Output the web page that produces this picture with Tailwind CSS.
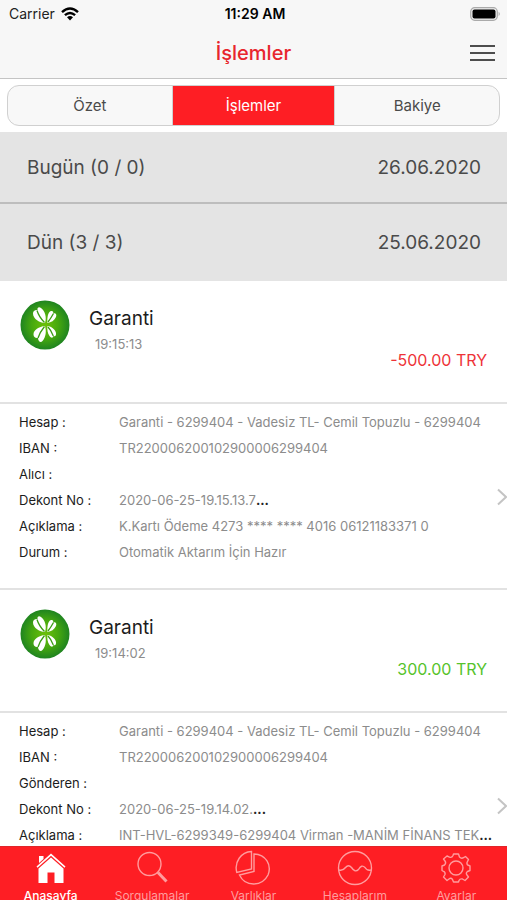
<!DOCTYPE html>
<html lang="tr">
<head>
<meta charset="utf-8">
<meta name="viewport" content="width=device-width, initial-scale=1">
<title>İşlemler</title>
<script src="https://cdn.jsdelivr.net/npm/@tailwindcss/browser@4"></script>
</head>
<body class="flex h-screen flex-col overflow-hidden bg-white font-['Inter','Liberation_Sans',sans-serif] text-[#4a4a4a]">
<svg class="absolute size-0" aria-hidden="true">
  <defs>
    <radialGradient id="leafBg"><stop offset="0" stop-color="#6cc008"/><stop offset=".55" stop-color="#46a80f"/><stop offset="1" stop-color="#1f8420"/></radialGradient>
    <symbol id="clover" viewBox="0 0 50 50">
      <circle cx="25" cy="25" r="24.5" fill="url(#leafBg)"/>
      <g fill="#fff">
        <path d="M25 23C20 23 13 19 13 13.500C13 11 15 9.500 17.500 10C17 7.500 19 6.500 21 8C25 11 27 17 25 23Z"/>
        <path d="M27.500 23C27 18 28 11.500 31 11C33 10.500 33.500 12 33.300 13.500C35.500 12.500 37 14.500 36 17C34.500 20.500 31 22.500 27.500 23Z"/>
        <path d="M25 26C19 26.500 13.500 30 13.500 34.500C13.500 37 15.500 38.500 18 38C18 41 20.500 43.500 22.500 41C26 37 26.500 31 25 26Z"/>
        <path d="M27.500 26C31.500 26.500 35.500 29.500 36 33C36.400 35.500 35 37 33.300 36C33 38.500 31 38 29.500 36C27.500 33 27 29.500 27.500 26Z"/>
      </g>
      <g fill="none" stroke="#3a9c14" stroke-width="1.300">
        <path d="M17 10.500Q19 17 24.500 22.500M33.500 13.500Q31 18 28 22M18 38Q20 32 24.500 26.500M33.300 36Q31 30 28 27"/>
      </g>
    </symbol>
  </defs>
</svg>

<header class="shrink-0 border-b border-[#c4c4c4] bg-[#f7f7f7]">
  <div class="grid h-7 grid-cols-3 items-center pr-[6px] pl-[9px] text-[#222]">
    <div class="flex items-center gap-[6px] text-sm">
      <span>Carrier</span>
      <svg class="h-[14px] w-[18px]" viewBox="0 0 18 14" fill="none" stroke="#000" stroke-width="2.400" aria-label="Wi-Fi"><path d="M1 5.200Q9-2.200 17 5.200M3.900 8.200Q9 3.600 14.100 8.200"/><path d="M9 13.500L6 10.300Q9 7.900 12 10.300Z" fill="#000" stroke="none"/></svg>
    </div>
    <span class="text-center text-sm font-semibold text-black">11:29 AM</span>
    <svg class="h-[14px] w-[31px] justify-self-end" viewBox="0 0 31 14" aria-label="Pil"><rect x=".7" y=".7" width="26.600" height="12.600" rx="4" fill="#eee" stroke="#aaa" stroke-width="1.200"/><rect x="2.500" y="2.500" width="23" height="9" rx="2" fill="#000"/><path d="M28.600 4.800Q31 7 28.600 9.200Z" fill="#aaa"/></svg>
  </div>
  <div class="grid h-[50px] grid-cols-[1fr_auto_1fr] items-center px-3">
    <h1 class="col-start-2 text-xl font-medium text-[#e8252d]">İşlemler</h1>
    <button type="button" aria-label="Menü" class="flex flex-col gap-[5px] justify-self-end">
      <span class="h-[2px] w-[25px] bg-[#4d4d4d]"></span><span class="h-[2px] w-[25px] bg-[#4d4d4d]"></span><span class="h-[2px] w-[25px] bg-[#4d4d4d]"></span>
    </button>
  </div>
</header>

<nav class="mx-[7px] mt-[6px] mb-[6px] grid h-[41px] shrink-0 grid-cols-3 overflow-hidden rounded-xl border border-[#d0d0d0] bg-[#f8f8f8] text-[15px] [&>button]:pt-[2px]">
  <button type="button">Özet</button>
  <button type="button" class="border-x border-[#d0d0d0] bg-[#fe1e24] text-white">İşlemler</button>
  <button type="button">Bakiye</button>
</nav>

<main class="min-h-0 flex-1 overflow-hidden">
  <h2 class="flex h-[72px] items-center justify-between border-b-2 border-[#bdbdbd] bg-[#e4e4e4] pt-[2px] pr-[26px] pl-[27px] text-[19px]"><span>Bugün (0 / 0)</span><time>26.06.2020</time></h2>
  <h2 class="flex h-[77px] items-center justify-between bg-[#e4e4e4] pt-[2px] pr-[26px] pl-[27px] text-[19px]"><span>Dün (3 / 3)</span><time>25.06.2020</time></h2>

  <article class="border-b-2 border-[#e2e2e2]">
    <div class="flex h-[123px] border-b-2 border-[#e2e2e2] px-5 pt-[19px]">
      <svg class="size-[50px] shrink-0" role="img" aria-label="Garanti"><use href="#clover"/></svg>
      <div class="ml-[19px] flex-1 pt-[5px]"><h3 class="text-[19px] leading-7 text-[#1c1c1c]">Garanti</h3><time class="ml-[6px] block text-[13px] leading-[22px] text-[#8c8c8c]">19:15:13</time></div>
      <p class="mt-12 text-base leading-6 text-[#ee3338]">-500.00 TRY</p>
    </div>
    <div class="relative pt-[5px] pb-[23px] text-[13px] leading-[26px]">
      <dl class="grid grid-cols-[100px_1fr] auto-rows-[26px] pl-[19px] whitespace-nowrap text-[#8c8c8c] [&_dt]:text-[#1c1c1c]">
        <dt>Hesap :</dt><dd>Garanti - 6299404 - Vadesiz TL- Cemil Topuzlu - 6299404</dd>
        <dt>IBAN :</dt><dd>TR220006200102900006299404</dd>
        <dt>Alıcı :</dt><dd></dd>
        <dt>Dekont No :</dt><dd>2020-06-25-19.15.13.7<span class="font-bold text-[#222]">...</span></dd>
        <dt>Açıklama :</dt><dd>K.Kartı Ödeme 4273 **** **** 4016 06121183371 0</dd>
        <dt>Durum :</dt><dd>Otomatik Aktarım İçin Hazır</dd>
      </dl>
      <svg class="absolute top-[84px] right-0 h-[18px] w-[10px]" viewBox="0 0 10 18" fill="none" stroke="#c4c4c4" stroke-width="2" aria-hidden="true"><path d="M1 1.500L9 9L1 16.500"/></svg>
    </div>
  </article>

  <article>
    <div class="flex h-[123px] border-b-2 border-[#e2e2e2] px-5 pt-[19px]">
      <svg class="size-[50px] shrink-0" role="img" aria-label="Garanti"><use href="#clover"/></svg>
      <div class="ml-[19px] flex-1 pt-[5px]"><h3 class="text-[19px] leading-7 text-[#1c1c1c]">Garanti</h3><time class="ml-[6px] block text-[13px] leading-[22px] text-[#8c8c8c]">19:14:02</time></div>
      <p class="mt-12 text-base leading-6 text-[#56c32b]">300.00 TRY</p>
    </div>
    <div class="relative pt-[5px] text-[13px] leading-[26px]">
      <dl class="grid grid-cols-[100px_1fr] auto-rows-[26px] pl-[19px] whitespace-nowrap text-[#8c8c8c] [&_dt]:text-[#1c1c1c]">
        <dt>Hesap :</dt><dd>Garanti - 6299404 - Vadesiz TL- Cemil Topuzlu - 6299404</dd>
        <dt>IBAN :</dt><dd>TR220006200102900006299404</dd>
        <dt>Gönderen :</dt><dd></dd>
        <dt>Dekont No :</dt><dd>2020-06-25-19.14.02.<span class="font-bold text-[#222]">...</span></dd>
        <dt>Açıklama :</dt><dd>INT-HVL-6299349-6299404 Virman -MANİM FİNANS TEK<span class="font-bold text-[#222]">...</span></dd>
      </dl>
      <svg class="absolute top-[84px] right-0 h-[18px] w-[10px]" viewBox="0 0 10 18" fill="none" stroke="#c4c4c4" stroke-width="2" aria-hidden="true"><path d="M1 1.500L9 9L1 16.500"/></svg>
    </div>
  </article>
</main>

<footer class="h-[54px] shrink-0 overflow-hidden border-t border-[#e0252a] bg-[#fe1e24]">
  <nav class="grid grid-cols-5 pt-[3px] text-xs leading-4 text-[#ff9c9e] [&_a]:flex [&_a]:flex-col [&_a]:items-center [&_a]:gap-[2px] [&_svg]:size-9">
    <a href="#" class="font-medium text-white"><svg viewBox="0 0 36 36" fill="currentColor"><path d="M3.500 16.500L18 3.500L32.500 16.500L31.500 17.700L18 5.800L4.500 17.700Z"/><path d="M6 6H10.500V9L6 13Z"/><path d="M5.500 18.500L18 7.500L30.500 18.500V33H21.500V22.500H14.500V33H5.500Z"/></svg>Anasayfa</a>
    <a href="#"><svg viewBox="0 0 36 36" fill="none" stroke="currentColor" stroke-width="1.400"><circle cx="15.500" cy="14" r="11.500"/><path d="M24 22.500L32.500 31.500" stroke-width="3"/></svg>Sorgulamalar</a>
    <a href="#"><svg viewBox="0 0 36 36" fill="none" stroke="currentColor" stroke-width="1.400"><path d="M16.500 1.500V19L1.800 22.500C-1 12 6 2 16.500 1.500Z"/><path d="M19 4V21.500L4.500 25C10 37 27 37 33 25C37 15 31 4.500 19 4Z"/></svg>Varlıklar</a>
    <a href="#"><svg viewBox="0 0 36 36" fill="none" stroke="currentColor" stroke-width="1.400"><circle cx="18" cy="18" r="16.500"/><path d="M2 20Q6 21 8.500 17.500Q11.500 14 14.500 17.500Q18 23 21.500 19.500Q24.500 14 28 17.500Q30 21 34 20"/></svg>Hesaplarım</a>
    <a href="#"><svg viewBox="0 0 36 36" fill="none" stroke="currentColor" stroke-width="1.400" stroke-linejoin="round"><circle cx="18" cy="18" r="7"/><path d="M15.500 4H20.500L21.500 7Q23.500 9 25.500 7.600L27.500 6.500L30.500 9.500L29 12.500Q28.500 15 31 15.500L32 16V20.500L29.500 21.500Q27.500 23 29 25L30.500 27L27 30.500L24.500 29Q22 28.500 21 30.500L20.500 32H15.500L14.500 29.500Q13 27.500 11 29L9 30.500L5.500 27L7 24.500Q7.500 22 5.500 21.300L4 20.500V16L6.500 15Q8.500 13 7 11L5.500 9L9 6L11.500 7.200Q14 8 15 5.500Z"/></svg>Ayarlar</a>
  </nav>
</footer>
</body>
</html>
